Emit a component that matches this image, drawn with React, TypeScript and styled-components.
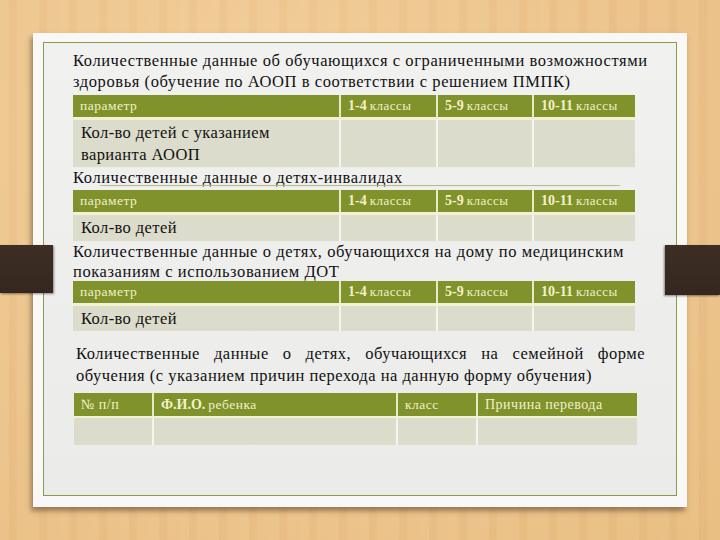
import React from "react";
import styled, { createGlobalStyle } from "styled-components";

const Global = createGlobalStyle`
  html, body { margin: 0; padding: 0; }
  body {
    width: 720px;
    height: 540px;
    overflow: hidden;
    font-family: "Liberation Serif", "DejaVu Serif", serif;
  }
`;

const Desk = styled.div`
  position: relative;
  width: 720px;
  height: 540px;
  box-sizing: border-box;
  padding: 33px 33px 0 33px;
  font-family: "Liberation Serif", "DejaVu Serif", serif;
  background:
    repeating-linear-gradient(90deg, rgba(255,245,225,0.05) 0 9px, rgba(170,110,50,0.04) 9px 17px, rgba(255,240,210,0.04) 17px 30px),
    radial-gradient(ellipse at 35% 25%, #f1cd99 0%, #ecc38b 55%, #e8bd80 100%);
`;

const Bar = styled.div<{ $side: "left" | "right" }>`
  position: absolute;
  top: 245px;
  height: ${(p) => (p.$side === "left" ? 48 : 50)}px;
  ${(p) => (p.$side === "left" ? "left: 0; width: 53px;" : "right: 0; width: 55px;")}
  background: linear-gradient(180deg, #3d2d25, #35271f);
  box-shadow: ${(p) => (p.$side === "left" ? "1px 1px 2px" : "-1px 1px 2px")} rgba(0,0,0,0.45);
`;

const Paper = styled.div`
  width: 654px;
  height: 474px;
  box-sizing: border-box;
  padding: 9px 10px 11px 10px;
  background: #f8f8f6;
  box-shadow: -2px 4px 5px rgba(70, 50, 30, 0.5);
`;

const Sheet = styled.div`
  height: 100%;
  box-sizing: border-box;
  border: 1px solid #8c9a52;
  background: linear-gradient(180deg, #f1f1f0, #ebebea);
  padding: 7px 0 0 29px;
  display: flex;
  flex-direction: column;
  align-items: flex-start;
  color: #111;
`;

const Title = styled.div<{ $lh?: number }>`
  position: relative;
  font-size: 16.5px;
  line-height: ${(p) => p.$lh ?? 21}px;
  letter-spacing: 0.58px;
  white-space: nowrap;
`;

const Underlined = styled.span`
  &::after {
    content: "";
    position: absolute;
    left: 27px;
    width: 520px;
    top: 17px;
    height: 1px;
    background: #b9b98e;
  }
`;

const JustTitle = styled.div`
  font-size: 16.5px;
  line-height: 22px;
  margin-top: 11px;
  margin-left: 3px;
  width: 569px;
  letter-spacing: 0.5px;
`;

const JustLine = styled.div<{ $justify?: boolean }>`
  text-align: ${(p) => (p.$justify ? "justify" : "left")};
  text-align-last: ${(p) => (p.$justify ? "justify" : "left")};
  white-space: ${(p) => (p.$justify ? "normal" : "nowrap")};
`;

const Table = styled.div<{ $mt: number; $ml?: number }>`
  margin-top: ${(p) => p.$mt}px;
  margin-left: ${(p) => p.$ml ?? 0}px;
  display: flex;
  flex-direction: column;
`;

const Row = styled.div<{ $cols: string; $h: number; $head?: boolean; $sep?: number }>`
  display: grid;
  grid-template-columns: ${(p) => p.$cols};
  height: ${(p) => p.$h}px;
  background: ${(p) => (p.$head ? "#7f922c" : "#dcdccc")};
  border-bottom: ${(p) => (p.$head ? `${p.$sep ?? 3}px solid #f3f1cf` : "1px solid #eeeee6")};
`;

const HeadCell = styled.div<{ $size?: number }>`
  color: #f4f0c9;
  font-size: ${(p) => p.$size ?? 13}px;
  letter-spacing: 0.5px;
  display: flex;
  align-items: center;
  padding-left: 7px;
  white-space: nowrap;
  & + & { border-left: 2px solid #e7e9c6; }
  b { font-size: 14px; font-weight: bold; margin-right: 3px; letter-spacing: 0; }
`;

const BodyCell = styled.div`
  font-size: 16.5px;
  line-height: 22px;
  letter-spacing: 0.4px;
  padding: 2px 0 0 8px;
  white-space: nowrap;
  & + & { border-left: 2px solid #f5f5ef; }
`;

const C1 = "266px 97px 96px 103px";
const C4 = "78px 244px 80px 161px";

function GradeHeads() {
  return (
    <>
      <HeadCell $size={13.5}>параметр</HeadCell>
      <HeadCell><b>1-4</b>классы</HeadCell>
      <HeadCell><b>5-9</b>классы</HeadCell>
      <HeadCell><b>10-11</b>классы</HeadCell>
    </>
  );
}

function EmptyCells({ n }: { n: number }) {
  return (
    <>
      {Array.from({ length: n }, (_, i) => (
        <BodyCell key={i} />
      ))}
    </>
  );
}

export default function App() {
  return (
    <>
      <Global />
      <Desk>
        <Paper>
          <Sheet>
            <Title $lh={21}>
              Количественные данные об обучающихся с ограниченными возможностями
              <br />
              здоровья (обучение по АООП в соответствии с решением ПМПК)
            </Title>

            <Table $mt={3}>
              <Row $cols={C1} $h={22} $head>
                <GradeHeads />
              </Row>
              <Row $cols={C1} $h={47}>
                <BodyCell>Кол-во детей с указанием<br />варианта АООП</BodyCell>
                <EmptyCells n={3} />
              </Row>
            </Table>

            <Title $lh={20}>
              <Underlined>Количественные данные о детях-инвалидах</Underlined>
            </Title>

            <Table $mt={2}>
              <Row $cols={C1} $h={22} $head>
                <GradeHeads />
              </Row>
              <Row $cols={C1} $h={26}>
                <BodyCell>Кол-во детей</BodyCell>
                <EmptyCells n={3} />
              </Row>
            </Table>

            <Title $lh={20}>
              Количественные данные о детях, обучающихся на дому по медицинским
              <br />
              показаниям с использованием ДОТ
            </Title>

            <Table $mt={-1}>
              <Row $cols={C1} $h={22} $head>
                <GradeHeads />
              </Row>
              <Row $cols={C1} $h={25}>
                <BodyCell>Кол-во детей</BodyCell>
                <EmptyCells n={3} />
              </Row>
            </Table>

            <JustTitle>
              <JustLine $justify>
                Количественные данные о детях, обучающихся на семейной форме
              </JustLine>
              <JustLine>обучения (с указанием причин перехода на данную форму обучения)</JustLine>
            </JustTitle>

            <Table $mt={6} $ml={1}>
              <Row $cols={C4} $h={23} $head $sep={2}>
                <HeadCell $size={14}>№ п/п</HeadCell>
                <HeadCell $size={13.5}><b>Ф.И.О.</b>ребенка</HeadCell>
                <HeadCell $size={13.5}>класс</HeadCell>
                <HeadCell $size={14}>Причина перевода</HeadCell>
              </Row>
              <Row $cols={C4} $h={27}>
                <EmptyCells n={4} />
              </Row>
            </Table>
          </Sheet>
        </Paper>
        <Bar $side="left" />
        <Bar $side="right" />
      </Desk>
    </>
  );
}
